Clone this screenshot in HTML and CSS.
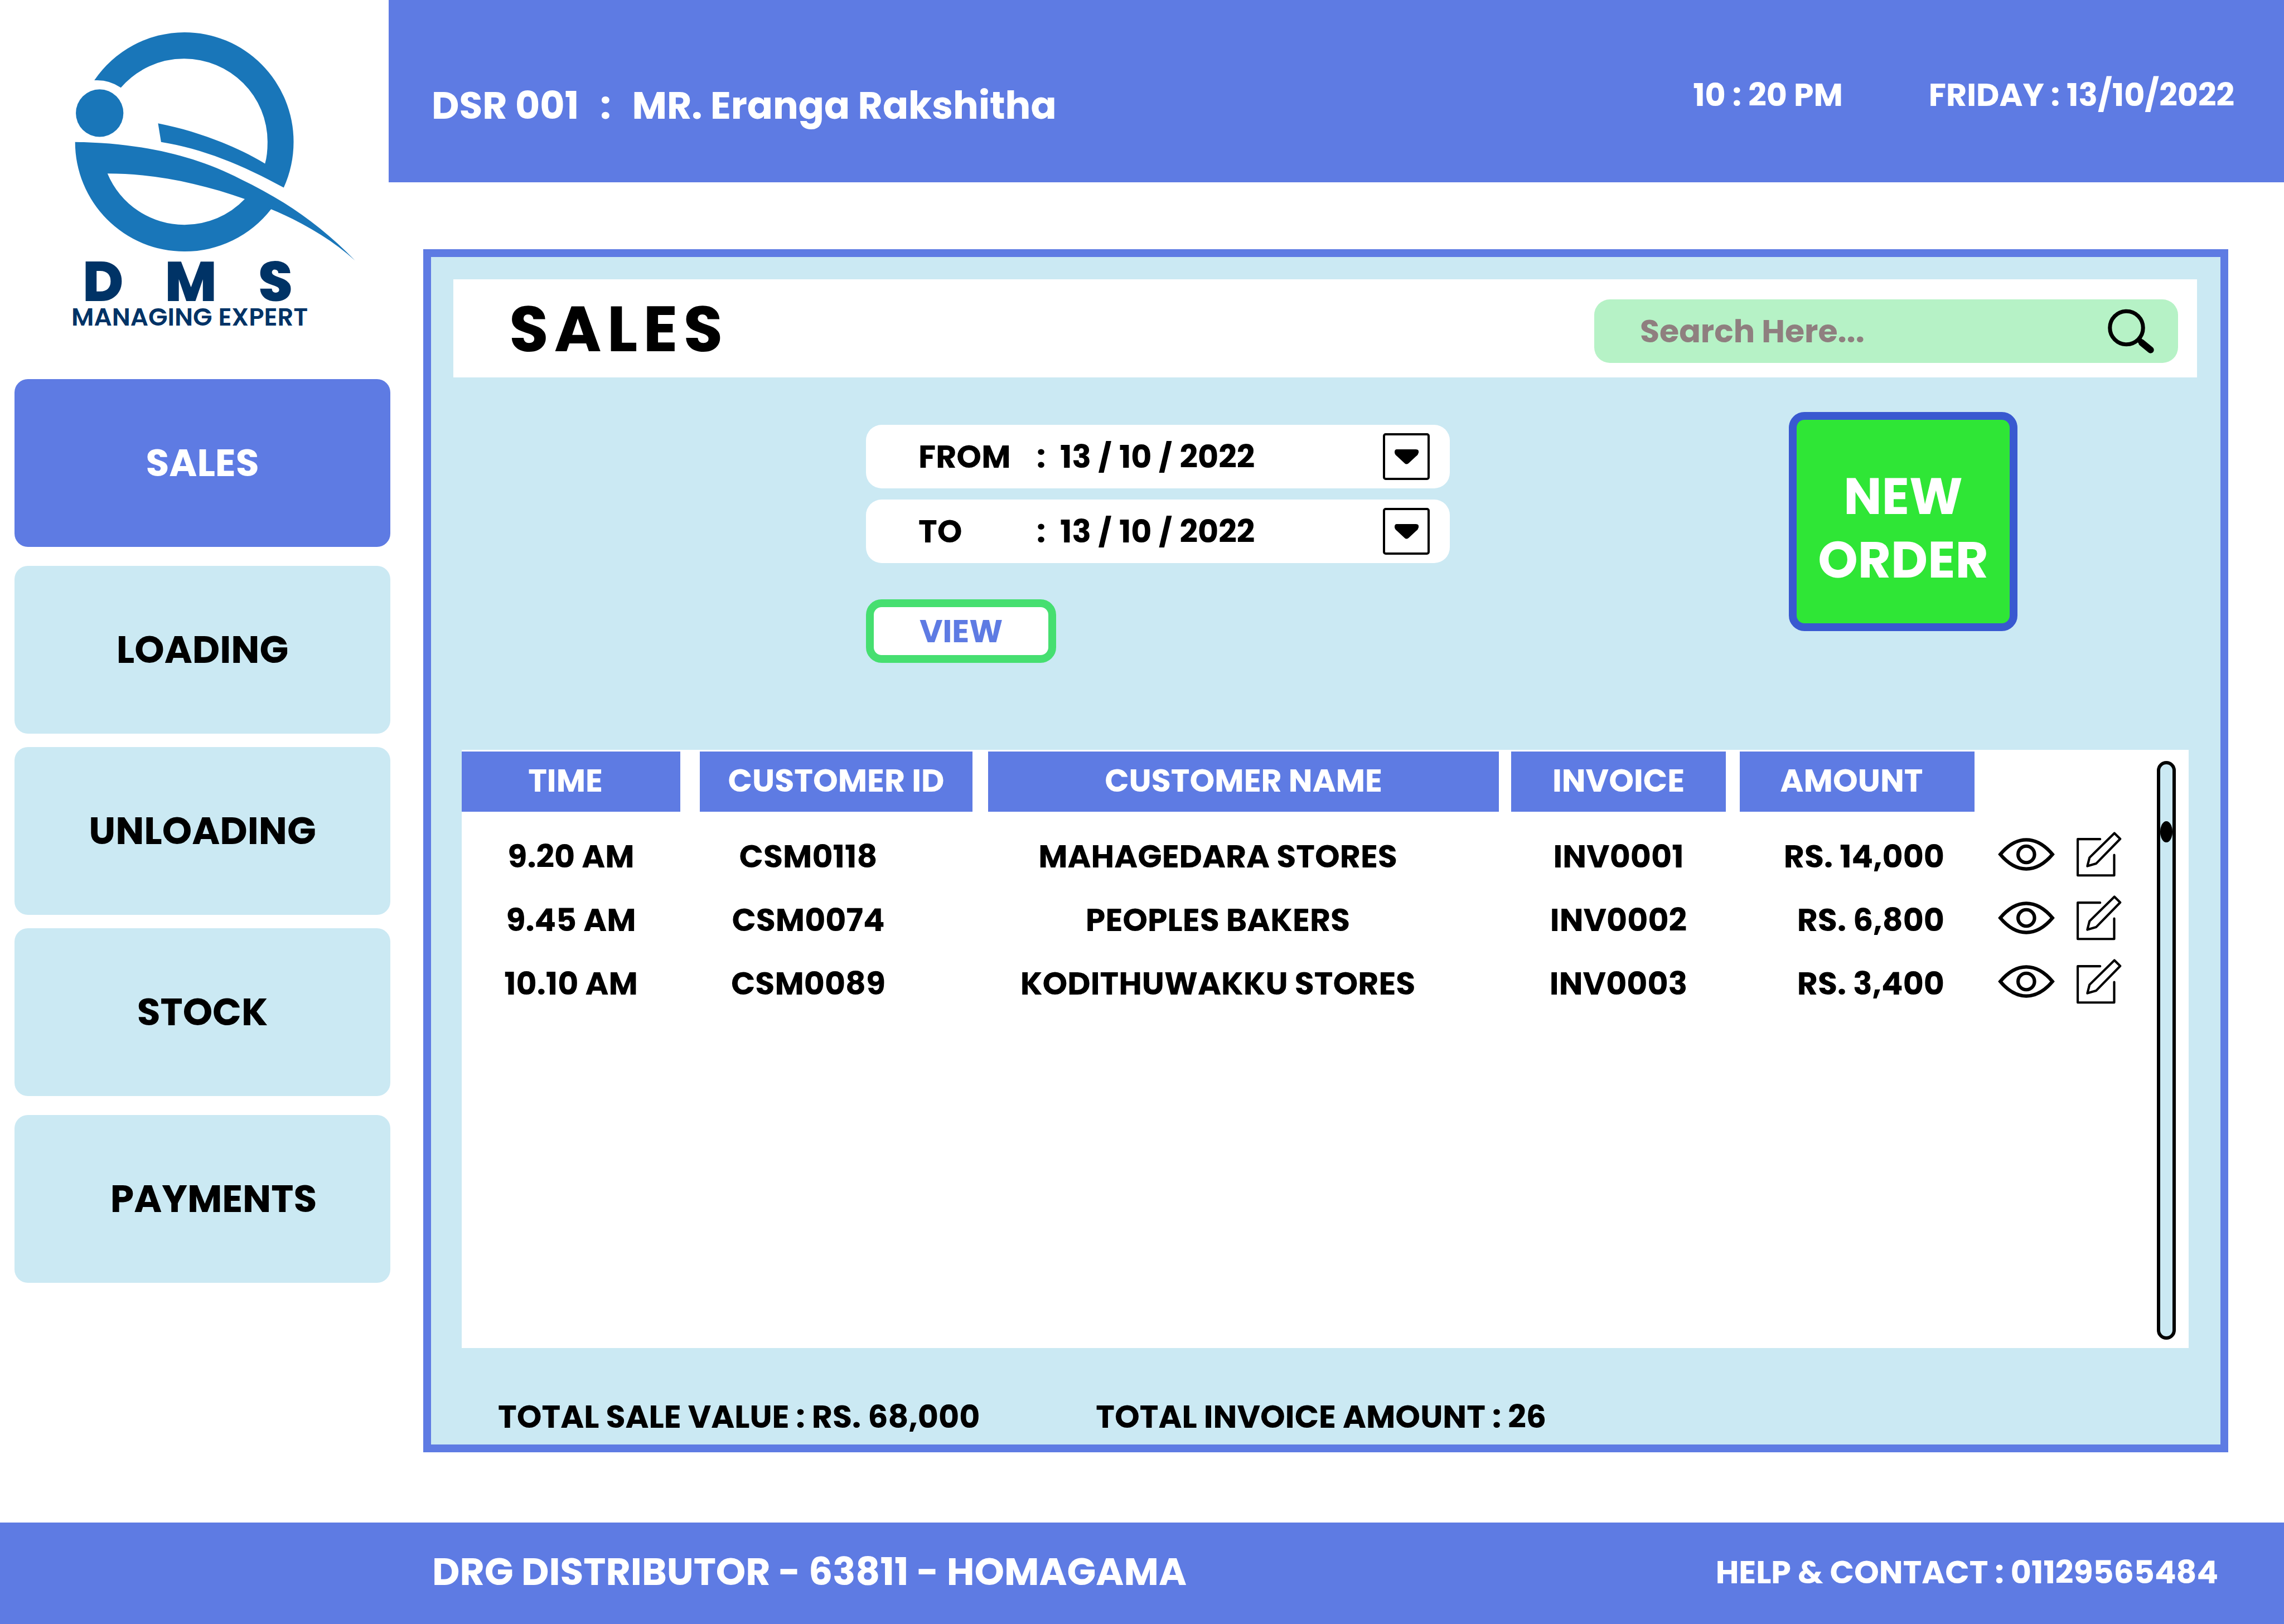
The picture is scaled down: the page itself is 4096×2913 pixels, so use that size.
FILE: index.html
```html
<!DOCTYPE html>
<html lang="en">
<head>
<meta charset="utf-8">
<title>DMS - Sales</title>
<link rel="stylesheet" href="styles.css">
</head>
<body>
<svg class="sprite" aria-hidden="true">
  <symbol id="eye" viewBox="0 0 297 172">
    <path d="M12 86C55 35 100 10 148 10S242 35 285 86C242 137 196 162 148 162S55 137 12 86Z" fill="none" stroke="#000" stroke-width="18"/>
    <circle cx="148" cy="86" r="43" fill="none" stroke="#000" stroke-width="18"/>
  </symbol>
  <symbol id="edit" viewBox="0 0 234 234">
    <path d="M122 38H6V226H195V120M196 7L226 37L101 165L56 178L67 134Z" fill="none" stroke="#000" stroke-width="12" stroke-linecap="round" stroke-linejoin="round"/>
  </symbol>
  <symbol id="drop" viewBox="0 0 84 84">
    <rect x="2" y="2" width="80" height="80" rx="3" fill="none" stroke="#000" stroke-width="4"/>
    <path d="M25 29H59Q65 29 64 35Q63 39 60 41L46 54Q42 57 39 54L25 41Q21 38 21 34Q21 29 25 29Z"/>
  </symbol>
</svg>

<div class="app">
  <aside class="sidebar">
    <div class="brand">
      <svg class="brand-mark" viewBox="0 0 697 470" role="img" aria-label="DMS logo">
        <g transform="scale(.4535 .4354)" fill="#1976b9">
          <path d="M373 331A432 451 0 0 1 729 133A432 451 0 0 1 1161 584Q1161 683 1122 773C960 680 800 612 637 585L625 508C780 540 930 600 1048 674Q1058 640 1058 584A329 342 0 0 0 729 242A329 342 0 0 0 478 361Q430 327 373 331Z"/>
          <ellipse cx="394" cy="466" rx="94" ry="98"/>
          <path fill-rule="evenodd" d="M297 585C540 588 760 635 950 737C1125 825 1265 925 1404 1073C1310 985 1190 913 1072 862A432 451 0 0 1 729 1036A432 451 0 0 1 297 585ZM425 715C610 715 790 755 968 820A329 342 0 0 1 729 926A329 342 0 0 1 425 715Z"/>
        </g>
      </svg>
      <div class="brand-name"><span>D</span><span>M</span><span>S</span></div>
      <div class="brand-tag">MANAGING EXPERT</div>
    </div>
    <nav class="nav">
      <div class="nav-group">
        <button class="nav-item nav-item-active" type="button">SALES</button>
      </div>
      <div class="nav-group">
        <button class="nav-item" type="button">LOADING</button>
        <button class="nav-item" type="button">UNLOADING</button>
        <button class="nav-item" type="button">STOCK</button>
      </div>
      <div class="nav-group">
        <button class="nav-item nav-item-inset" type="button">PAYMENTS</button>
      </div>
    </nav>
  </aside>

  <header class="topbar">
    <div class="user"><span>DSR 001</span><span>:</span><span>MR. Eranga Rakshitha</span></div>
    <div class="clock"><span>10 : 20 PM</span><span>FRIDAY : 13/10/2022</span></div>
  </header>

  <main class="main">
    <section class="panel">
      <div class="titlebar">
        <h1 class="title">SALES</h1>
        <form class="search">
          <input class="search-input" type="search" placeholder="Search Here..." aria-label="Search">
          <button class="search-button" type="button" aria-label="Search">
            <svg class="search-icon" viewBox="0 0 118 113">
              <circle cx="47" cy="48" r="42" fill="none" stroke="#000" stroke-width="10"/>
              <path d="M76 76L88 87" stroke="#000" stroke-width="14"/>
              <path d="M86 86L108 104" stroke="#000" stroke-width="17" stroke-linecap="round"/>
            </svg>
          </button>
        </form>
      </div>

      <div class="filters">
        <form class="range">
          <div class="date">
            <label class="date-label" for="from">FROM</label>
            <span>:</span>
            <select class="date-select" id="from"><option>13 / 10 / 2022</option></select>
            <svg class="date-arrow" aria-hidden="true"><use href="#drop"/></svg>
          </div>
          <div class="date">
            <label class="date-label" for="to">TO</label>
            <span>:</span>
            <select class="date-select" id="to"><option>13 / 10 / 2022</option></select>
            <svg class="date-arrow" aria-hidden="true"><use href="#drop"/></svg>
          </div>
          <button class="view" type="button">VIEW</button>
        </form>
        <button class="new-order" type="button">NEW ORDER</button>
      </div>

      <div class="orders">
        <table class="table">
          <colgroup>
            <col class="col-time"><col class="col-id"><col><col class="col-invoice"><col class="col-amount"><col class="col-actions">
          </colgroup>
          <thead>
            <tr>
              <th class="time lead">TIME</th>
              <th class="id">CUSTOMER ID</th>
              <th class="name">CUSTOMER NAME</th>
              <th class="invoice">INVOICE</th>
              <th class="lead">AMOUNT</th>
              <td></td>
            </tr>
          </thead>
          <tbody>
            <tr>
              <td class="time">9.20 AM</td>
              <td class="id">CSM0118</td>
              <td class="name">MAHAGEDARA STORES</td>
              <td class="invoice">INV0001</td>
              <td class="amount">RS. 14,000</td>
              <td><div class="actions">
                <button class="icon-button" type="button" aria-label="View order"><svg class="eye"><use href="#eye"/></svg></button>
                <button class="icon-button" type="button" aria-label="Edit order"><svg class="edit"><use href="#edit"/></svg></button>
              </div></td>
            </tr>
            <tr>
              <td class="time">9.45 AM</td>
              <td class="id">CSM0074</td>
              <td class="name">PEOPLES BAKERS</td>
              <td class="invoice">INV0002</td>
              <td class="amount">RS. 6,800</td>
              <td><div class="actions">
                <button class="icon-button" type="button" aria-label="View order"><svg class="eye"><use href="#eye"/></svg></button>
                <button class="icon-button" type="button" aria-label="Edit order"><svg class="edit"><use href="#edit"/></svg></button>
              </div></td>
            </tr>
            <tr>
              <td class="time">10.10 AM</td>
              <td class="id">CSM0089</td>
              <td class="name">KODITHUWAKKU STORES</td>
              <td class="invoice">INV0003</td>
              <td class="amount">RS. 3,400</td>
              <td><div class="actions">
                <button class="icon-button" type="button" aria-label="View order"><svg class="eye"><use href="#eye"/></svg></button>
                <button class="icon-button" type="button" aria-label="Edit order"><svg class="edit"><use href="#edit"/></svg></button>
              </div></td>
            </tr>
          </tbody>
        </table>
        <div class="scrollbar"><div class="scroll-thumb"></div></div>
      </div>

      <div class="totals">
        <span>TOTAL SALE VALUE : RS. 68,000</span>
        <span>TOTAL INVOICE AMOUNT : 26</span>
      </div>
    </section>
  </main>

  <footer class="footer">
    <span class="distributor">DRG DISTRIBUTOR - 63811 - HOMAGAMA</span>
    <span>HELP &amp; CONTACT : 01129565484</span>
  </footer>
</div>
</body>
</html>
```
FILE: styles.css
```css
:root {
  --blue: #5e7be3;
  --pale: #cbe9f3;
  --navy: #003366;
}

* { box-sizing: border-box; }

body {
  margin: 0;
  background: #fff;
  color: #000;
  font: 700 57px/1 Poppins, Inter, sans-serif;
}

button, input, select {
  margin: 0;
  padding: 0;
  border: 0;
  background: none;
  color: inherit;
  font: inherit;
}

button { cursor: pointer; }

svg { display: block; }

.sprite { position: absolute; width: 0; height: 0; }

.app {
  display: grid;
  grid-template-columns: 697px 1fr;
  grid-template-rows: 327px 1fr 182px;
  min-height: 100vh;
}

/* Sidebar */
.sidebar { grid-row: 1 / 3; }

.brand { color: var(--navy); }

.brand-mark { width: 100%; }

.brand-name {
  display: flex;
  gap: 74px;
  padding-left: 148px;
  font-size: 100px;
  font-weight: 800;
  line-height: 70px;
}

.brand-tag {
  padding-left: 128px;
  font-size: 45px;
  font-weight: 600;
  line-height: 57px;
}

.nav {
  display: flex;
  flex-direction: column;
  gap: 34px;
  margin: 83px -3px 0 26px;
}

.nav-group {
  display: flex;
  flex-direction: column;
  gap: 24px;
}

.nav-item {
  height: 301px;
  border-radius: 24px;
  background: var(--pale);
  font-size: 68px;
  text-align: center;
}

.nav-item-active { background: var(--blue); color: #fff; }

.nav-item-inset { padding-left: 40px; }

/* Top bar */
.topbar {
  display: flex;
  justify-content: space-between;
  align-items: flex-start;
  padding: 142px 89px 0 77px;
  background: var(--blue);
  color: #fff;
}

.user {
  display: flex;
  gap: 38px;
  font-size: 68px;
  line-height: 96px;
}

.clock {
  display: flex;
  gap: 154px;
  line-height: 57px;
}

/* Panel */
.main {
  display: flex;
  padding: 120px 100px 126px 62px;
}

.panel {
  display: flex;
  flex: 1;
  flex-direction: column;
  padding: 40px 42px 0 40px;
  border: 14px solid var(--blue);
  background: var(--pale);
}

.titlebar {
  display: flex;
  justify-content: space-between;
  align-items: center;
  height: 176px;
  padding: 0 34px 0 100px;
  background: #fff;
}

.title {
  margin: 0;
  font-size: 115px;
  letter-spacing: 10px;
}

.search {
  display: flex;
  align-items: center;
  width: 1047px;
  height: 114px;
  margin-top: 10px;
  padding: 0 42px 0 82px;
  border-radius: 28px;
  background: #b6f2c6;
}

.search-input {
  flex: 1;
  min-width: 0;
  height: 100%;
  outline: 0;
}

.search-input::placeholder { color: #8f7f7f; opacity: 1; }

.search-icon { width: 84px; height: 80px; }

/* Filters */
.filters {
  display: grid;
  grid-template-columns: 740fr 1047px 608fr 410px 322fr;
  align-items: start;
  padding: 62px 0 156px;
}

.range {
  grid-column: 2;
  display: flex;
  flex-direction: column;
  align-items: flex-start;
  padding-top: 23px;
}

.date {
  display: grid;
  grid-template-columns: 212px 42px 1fr 84px;
  align-items: center;
  width: 100%;
  height: 114px;
  margin-bottom: 20px;
  padding: 0 36px 0 94px;
  border-radius: 28px;
  background: #fff;
}

.date-select {
  grid-row: 1;
  grid-column: 3 / 5;
  height: 100%;
  outline: 0;
  appearance: none;
}

.date-arrow {
  grid-row: 1;
  grid-column: 4;
  width: 84px;
  height: 84px;
  pointer-events: none;
}

.view {
  width: 341px;
  height: 114px;
  margin-top: 45px;
  border: 14px solid #46df70;
  border-radius: 28px;
  background: #fff;
  color: var(--blue);
}

.new-order {
  grid-column: 4;
  height: 393px;
  padding: 22px 20px 0;
  border: 14px solid #3959d0;
  border-radius: 28px;
  background: #2fe636;
  color: #fff;
  font-size: 91px;
  line-height: 114px;
}

/* Orders */
.orders {
  display: flex;
  flex: 1;
  align-items: flex-start;
  margin: 0 15px;
  padding: 3px 23px 15px 0;
  background: #fff;
}

.table {
  flex: 1;
  table-layout: fixed;
  border-spacing: 0;
  text-align: center;
}

.col-time { width: 427px; }
.col-id { width: 517px; }
.col-invoice { width: 410px; }
.col-amount { width: 421px; }
.col-actions { width: 327px; }

.table th {
  height: 108px;
  padding: 0 0 4px;
  background: var(--blue);
  color: #fff;
  font-weight: 700;
}

.table td { height: 114px; padding: 0; }

.table thead td { height: 108px; }

.table .lead { padding-right: 20px; }

.table .time { border-right: 35px solid #fff; }
.table .id { border-right: 28px solid #fff; }
.table .name { border-right: 22px solid #fff; }
.table .invoice { border-right: 25px solid #fff; }

.table tbody::before {
  content: "";
  display: block;
  height: 23px;
}

.table td.id { padding-right: 100px; }

.table td.name { padding-right: 92px; }

.table td.amount { padding-right: 54px; text-align: right; }

.actions {
  display: flex;
  gap: 39px;
  align-items: center;
  padding: 0 0 8px 42px;
}

.eye { width: 102px; height: 59px; }
.edit { width: 81px; height: 81px; }

.scrollbar {
  align-self: stretch;
  width: 34px;
  margin-top: 17px;
  padding-top: 102px;
  border: 6px solid #000;
  border-radius: 17px;
  background: var(--pale);
}

.scroll-thumb {
  height: 38px;
  border-radius: 50%;
  background: #000;
}

.totals {
  display: flex;
  gap: 208px;
  padding: 82px 0 9px 80px;
  line-height: 82px;
}

/* Footer */
.footer {
  grid-column: 1 / 3;
  display: flex;
  justify-content: space-between;
  align-items: center;
  padding: 0 118px 4px 775px;
  background: var(--blue);
  color: #fff;
}

.distributor { font-size: 68px; }
```
